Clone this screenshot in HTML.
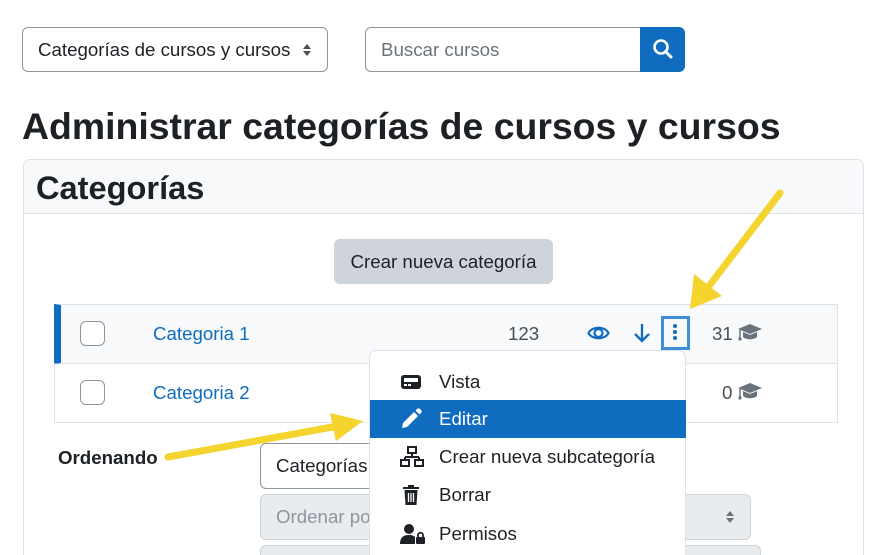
<!DOCTYPE html>
<html><head><meta charset="utf-8"><style>
*{box-sizing:border-box;margin:0;padding:0}
html,body{width:887px;height:555px;overflow:hidden}
body{background:#fff;font-family:"Liberation Sans",sans-serif;color:#1d2125;position:relative}
.abs{position:absolute}
.sel{border:1px solid #8f959e;border-radius:6px;font-size:18.7px;color:#1d2125;padding-left:15px;display:flex;align-items:center}
.updown{position:absolute;right:15px;top:50%;transform:translateY(-50%);width:10px;height:14px}
.item{position:absolute;left:0;width:316px;height:38px;display:flex;align-items:center;font-size:18.7px;color:#1d2125}
.item svg{position:absolute;left:30px}
.item span{position:absolute;left:69px}
</style></head><body>

<div class="abs sel" style="left:22px;top:27px;width:306px;height:45px">Categorías de cursos y cursos
<svg class="updown" viewBox="0 0 10 14"><path d="M5 1 L9 6 H1Z M5 13 L9 8 H1Z" fill="#495057"/></svg></div>

<div class="abs sel" style="left:365px;top:27px;width:280px;height:45px;border-radius:6px 0 0 6px;color:#6a737b">Buscar cursos</div>
<div class="abs" style="left:640px;top:27px;width:45px;height:45px;background:#0f6cbf;border-radius:0 6px 6px 0">
<svg width="45" height="45" viewBox="0 0 45 45"><circle cx="21" cy="20" r="6.5" fill="none" stroke="#fff" stroke-width="2.6"/><path d="M25.5 24.5 L31 30" stroke="#fff" stroke-width="3" stroke-linecap="round"/></svg></div>

<div class="abs" style="left:22px;top:105px;font-size:37.4px;font-weight:bold;white-space:nowrap">Administrar categorías de cursos y cursos</div>

<div class="abs" style="left:23px;top:159px;width:841px;height:396px;border:1px solid #dee2e6;border-bottom:none;border-radius:7px 7px 0 0"></div>
<div class="abs" style="left:24px;top:160px;width:839px;height:54px;background:#f8f9fa;border-bottom:1px solid #dee2e6;border-radius:6px 6px 0 0"></div>
<div class="abs" style="left:36px;top:169px;font-size:32.6px;font-weight:bold">Categorías</div>

<div class="abs" style="left:334px;top:239px;width:219px;height:45px;background:#ced4da;border-radius:6px;font-size:18.7px;display:flex;align-items:center;justify-content:center">Crear nueva categoría</div>

<div class="abs" style="left:54px;top:304px;width:784px;height:60px;background:#f8f9fa;border:1px solid #dee2e6;border-left:7px solid #0f6cbf"></div>
<div class="abs" style="left:54px;top:363px;width:784px;height:60px;border:1px solid #dee2e6;border-top:none"></div>
<div class="abs" style="left:80px;top:321px;width:25px;height:25px;border:1px solid #8f959e;border-radius:6px;background:#fff"></div>
<div class="abs" style="left:80px;top:380px;width:25px;height:25px;border:1px solid #8f959e;border-radius:6px;background:#fff"></div>
<div class="abs" style="left:153px;top:323px;font-size:18.7px;color:#0f6cbf">Categoria 1</div>
<div class="abs" style="left:153px;top:382px;font-size:18.7px;color:#0f6cbf">Categoria 2</div>
<div class="abs" style="left:508px;top:323px;font-size:18.7px;color:#495057">123</div>
<svg class="abs" style="left:587px;top:322px" width="23" height="22" viewBox="0 0 23 22"><path d="M1.5 11 C5 4,18 4,21.5 11 C18 18,5 18,1.5 11Z" fill="none" stroke="#0f6cbf" stroke-width="2.2"/><circle cx="11.5" cy="11" r="4" fill="none" stroke="#0f6cbf" stroke-width="2.2"/></svg>
<svg class="abs" style="left:633px;top:322px" width="18" height="22" viewBox="0 0 18 22"><path d="M9 2 V19 M2 12 L9 19 L16 12" fill="none" stroke="#0f6cbf" stroke-width="2.3"/></svg>
<div class="abs" style="left:661px;top:316px;width:29px;height:34px;border:3px solid #3d8fd8"></div>
<svg class="abs" style="left:671px;top:323px" width="8" height="20" viewBox="0 0 8 20"><circle cx="4" cy="3" r="2" fill="#0f6cbf"/><circle cx="4" cy="9" r="2" fill="#0f6cbf"/><circle cx="4" cy="15" r="2" fill="#0f6cbf"/></svg>
<div class="abs" style="left:712px;top:323px;font-size:18.7px;color:#495057">31</div>
<div class="abs" style="left:722px;top:382px;font-size:18.7px;color:#495057">0</div>
<svg class="abs" style="left:737px;top:323px" width="26" height="20" viewBox="0 0 26 20"><path d="M13 1 L25 6 L13 11 L1 6Z M6 9 V14 C9 17,17 17,20 14 V9 L13 12Z" fill="#6a737b"/><path d="M3 7 V15" stroke="#6a737b" stroke-width="1.5"/><circle cx="3" cy="16" r="1.6" fill="#6a737b"/></svg>
<svg class="abs" style="left:737px;top:382px" width="26" height="20" viewBox="0 0 26 20"><path d="M13 1 L25 6 L13 11 L1 6Z M6 9 V14 C9 17,17 17,20 14 V9 L13 12Z" fill="#6a737b"/><path d="M3 7 V15" stroke="#6a737b" stroke-width="1.5"/><circle cx="3" cy="16" r="1.6" fill="#6a737b"/></svg>

<div class="abs" style="left:58px;top:447px;font-size:18.7px;font-weight:bold">Ordenando</div>
<div class="abs sel" style="left:260px;top:443px;width:200px;height:46px">Categorías</div>
<div class="abs sel" style="left:260px;top:494px;width:491px;height:46px;background:#e9ecef;border-color:#ced4da;color:#8f959e">Ordenar por
<svg class="updown" viewBox="0 0 10 14"><path d="M5 1 L9 6 H1Z M5 13 L9 8 H1Z" fill="#6a737b"/></svg></div>
<div class="abs" style="left:260px;top:545px;width:501px;height:10px;background:#e9ecef;border:1px solid #ced4da;border-bottom:none;border-radius:6px 6px 0 0"></div>

<div class="abs" style="left:369px;top:350px;width:317px;height:205px;background:#fff;border:1px solid #dee2e6;border-bottom:none;border-radius:7px 7px 0 0">
<div class="item" style="top:12px"><svg width="22" height="18" viewBox="0 0 22 18"><rect x="1" y="2" width="20" height="14" rx="3" fill="#1d2125"/><rect x="4" y="5" width="14" height="4" fill="#fff"/><rect x="4" y="11" width="3" height="2" fill="#fff"/><rect x="8" y="11" width="3" height="2" fill="#fff"/></svg><span>Vista</span></div>
<div class="item" style="top:49px;background:#0f6cbf;color:#fff"><svg width="22" height="22" viewBox="0 0 22 22"><path d="M3 15 L14 4 L18 8 L7 19 L2 20Z M15.5 2.5 L17 1 C18 0,19 0,20 1 L21 2 C22 3,22 4,21 5 L19.5 6.5Z" fill="#fff"/></svg><span>Editar</span></div>
<div class="item" style="top:87px"><svg width="24" height="22" viewBox="0 0 24 22"><rect x="8" y="1" width="8" height="6" fill="none" stroke="#1d2125" stroke-width="2"/><path d="M12 7 V11 M5 11 H19 M5 11 V13 M19 11 V13" stroke="#1d2125" stroke-width="2" fill="none"/><rect x="1" y="14" width="8" height="6" fill="none" stroke="#1d2125" stroke-width="2"/><rect x="15" y="14" width="8" height="6" fill="none" stroke="#1d2125" stroke-width="2"/></svg><span>Crear nueva subcategoría</span></div>
<div class="item" style="top:125px"><svg width="22" height="22" viewBox="0 0 22 22"><path d="M3 3 H19 V5 H3Z M8 1 H14 V3 H8Z M4.5 6 H17.5 L16.5 21 H5.5Z" fill="#1d2125"/><path d="M8.5 9 V18 M11 9 V18 M13.5 9 V18" stroke="#fff" stroke-width="1.3"/></svg><span>Borrar</span></div>
<div class="item" style="top:164px"><svg width="26" height="22" viewBox="0 0 26 22"><circle cx="9" cy="6" r="5" fill="#1d2125"/><path d="M0 21 C0 14,4 12,9 12 C12 12,14 13,15 14 V21Z" fill="#1d2125"/><rect x="16" y="14" width="9" height="7" rx="1" fill="#1d2125"/><path d="M18 14 V12 C18 9,23 9,23 12 V14" fill="none" stroke="#1d2125" stroke-width="1.8"/></svg><span>Permisos</span></div>
</div>

<svg class="abs" style="left:0;top:0" width="887" height="555" viewBox="0 0 887 555">
<path d="M780 193 L706 290" stroke="#f5d430" stroke-width="7" stroke-linecap="round"/>
<path d="M690 309 L694 274 L722 296Z" fill="#f5d430"/>
<path d="M168 457 L338 426" stroke="#f5d430" stroke-width="7" stroke-linecap="round"/>
<path d="M363 421 L330 413 L336 441Z" fill="#f5d430"/>
</svg>
</body></html>
